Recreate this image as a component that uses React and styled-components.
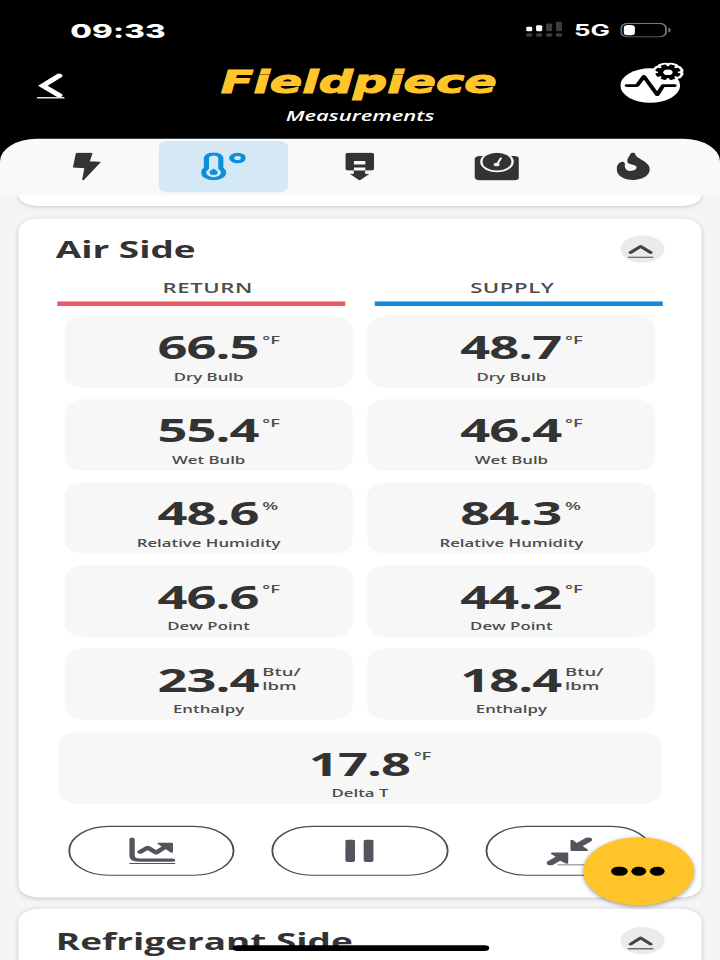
import React from 'react';
import styled, { createGlobalStyle } from 'styled-components';

const GlobalStyle = createGlobalStyle`
    * {
        box-sizing: border-box;
    }

    body {
        margin: 0;
        background: #f5f5f5;
        overflow: hidden;
    }
`

const Viewport = styled.div`
    width: 720px;
    height: 960px;
    overflow: hidden;
`

/* the phone screen is 390x844 points, stretched over the whole viewport */
const Screen = styled.div`
    position: relative;
    display: flex;
    flex-direction: column;
    width: 390px;
    height: 844px;
    overflow: hidden;
    background: #f5f5f5;
    color: #333;
    font-family: "Open Sans", "Noto Sans", sans-serif;
    transform: scale(1.84615, 1.13744);
    transform-origin: 0 0;
`

const Header = styled.header`
    flex: none;
    height: 142px;
    margin-bottom: -20px;
    background: #000;
    color: #fff;
`

const StatusBar = styled.div`
    display: flex;
    align-items: center;
    justify-content: space-between;
    height: 52px;
    padding: 0 26.5px 0 38px;
`

const Clock = styled.span`
    padding-top: 1px;
    font-family: Inter, sans-serif;
    font-size: 17px;
    font-weight: 800;
    letter-spacing: 0.1px;
`

const StatusIcons = styled.div`
    display: flex;
    align-items: center;
    gap: 5.6px;
`

const Network = styled.span`
    font-family: Inter, sans-serif;
    font-size: 14px;
    font-weight: 650;
`

const TitleBar = styled.div`
    display: flex;
    align-items: flex-start;
    justify-content: space-between;
    height: 70px;
    padding: 0 19px 0 20px;
`

const BackButton = styled.a`
    display: flex;
    width: 35px;
    margin-top: 11.8px;
`

const Brand = styled.div`
    display: flex;
    flex-direction: column;
    align-items: center;
    width: 160px;
`

const Logo = styled.div`
    height: 40px;
    color: #ffc52b;
    font-family: "DejaVu Sans", sans-serif;
    font-size: 27.5px;
    font-weight: 700;
    font-style: italic;
    line-height: 41px;
    white-space: nowrap;
    -webkit-text-stroke: 0.9px #ffc52b;
    transform: translateX(-1px) scaleX(0.942);
`

const Subtitle = styled.div`
    margin-left: -1px;
    font-size: 11.9px;
    font-weight: 600;
    font-style: italic;
    line-height: 19px;
`

const ProbeButton = styled.div`
    display: flex;
    margin-top: 3px;
`

const Tabs = styled.nav`
    position: relative;
    z-index: 1;
    flex: none;
    display: flex;
    gap: 4px;
    height: 48.5px;
    padding: 1.8px 12px;
    background: #f9f9f9;
    border-radius: 20px 20px 0 0;
`

const Tab = styled.div`
    display: flex;
    align-items: center;
    justify-content: center;
    width: 70px;
    height: 45px;
    border-radius: 5px;
    background: ${props => props.$active ? '#d4e8f6' : 'transparent'};
    color: ${props => props.$active ? '#0f8edb' : '#333'};
`

const Content = styled.main`
    display: flex;
    flex-direction: column;
    gap: 10.6px;
    padding: 0 10px;
`

const Card = styled.section`
    flex: none;
    height: ${props => props.$height}px;
    padding: 0 21px;
    background: #fff;
    border-radius: ${props => props.$cut ? '0 0 11px 11px' : '11px'};
    box-shadow: 0 1px 3px rgba(0, 0, 0, 0.17);
`

const CardHead = styled.div`
    display: flex;
    align-items: center;
    justify-content: space-between;
    height: 55px;
    margin: 0 -0.8px;
`

const CardTitle = styled.h2`
    margin: 0;
    padding-top: 2px;
    font-size: 20px;
    font-weight: 700;
    line-height: 28px;
`

const Collapse = styled.div`
    display: flex;
    align-items: center;
    justify-content: center;
    width: 24px;
    height: 24px;
    padding: 2.4px 1px 0 0;
    border-radius: 50%;
    background: #ebebeb;
`

const Columns = styled.div`
    display: grid;
    grid-template-columns: 1fr 1fr;
    gap: 16px;
`

const ColumnHead = styled.div`
    height: 22.5px;
    padding-left: ${props => props.$shift > 0 ? props.$shift : 0}px;
    padding-right: ${props => props.$shift < 0 ? -props.$shift : 0}px;
    border-bottom: 4px solid ${props => props.$color};
    color: #4d4d4d;
    font-size: 12px;
    font-weight: 650;
    line-height: 14px;
    letter-spacing: 0.3px;
    text-align: center;
`

const Readings = styled.div`
    display: grid;
    grid-template-columns: 156px 156px;
    gap: 10px 8px;
    padding: 9px 4px 10px;
`

const Tile = styled.div`
    height: ${props => props.$wide ? 64 : 63}px;
    margin: ${props => props.$wide ? '0 0.6px' : '0'};
    padding-top: ${props => props.$wide ? 14.6 : 14}px;
    background: #f7f7f7;
    border-radius: 11px;
    text-align: center;
`

const ValueRow = styled.div`
    display: grid;
    grid-template-columns: 1fr auto 1fr;
    height: 33px;
`

const Value = styled.span`
    grid-column: 2;
    margin: -1.2px 0.3px 0 -0.3px;
    font-size: 28.4px;
    font-weight: 700;
    line-height: 28px;
    letter-spacing: -0.5px;
`

const Unit = styled.span`
    padding-left: 1.7px;
    color: #4d4d4d;
    font-size: 10px;
    font-weight: 550;
    line-height: 13.3px;
    text-align: left;
    white-space: pre-line;
`

const Label = styled.div`
    color: #4d4d4d;
    font-size: 9.1px;
    font-weight: 550;
    line-height: 13px;
`

const Actions = styled.div`
    display: flex;
    gap: 20px;
    padding: 19px 6px 0;
`

const Action = styled.div`
    display: flex;
    align-items: center;
    justify-content: center;
    width: ${props => props.$width}px;
    height: 44px;
    border: 1.2px solid #4d4d52;
    border-radius: 22px;
    color: #54555c;
`

const MoreButton = styled.div`
    position: absolute;
    right: 13.6px;
    bottom: 48px;
    display: flex;
    align-items: center;
    justify-content: center;
    gap: 1.9px;
    width: 60px;
    height: 60px;
    padding-right: 1.4px;
    border-radius: 50%;
    background: #ffc42a;
    box-shadow: 0 1px 3px rgba(0, 0, 0, 0.4);
`

const Dot = styled.span`
    width: 8.3px;
    height: 8.3px;
    border-radius: 50%;
    background: #000;
`

const HomeIndicator = styled.div`
    position: absolute;
    left: 125.7px;
    bottom: 8px;
    width: 139px;
    height: 5px;
    border-radius: 3px;
    background: #000;
`

const SignalIcon = () => (
    <svg width="20" height="14" viewBox="0 0 20 14">
        <g fill="#fff">
            <rect x="0" y="4.6" width="3.3" height="3.8" rx="0.9" />
            <rect x="5.4" y="3.2" width="3.3" height="5.2" rx="0.9" />
        </g>
        <g fill="#3c3c3c">
            <rect x="10.8" y="1.6" width="3.3" height="6.8" rx="0.9" />
            <rect x="16.1" y="0" width="3.3" height="8.4" rx="0.9" />
            <rect x="0" y="10.3" width="3.3" height="3" rx="0.9" />
            <rect x="5.4" y="10.3" width="3.3" height="3" rx="0.9" />
            <rect x="10.8" y="10.3" width="3.3" height="3" rx="0.9" />
            <rect x="16.1" y="10.3" width="3.3" height="3" rx="0.9" />
        </g>
    </svg>
)

const BatteryIcon = () => (
    <svg width="27.5" height="13" viewBox="0 0 27.5 13">
        <rect x="0.5" y="0.5" width="24.2" height="12" rx="3.8" fill="none" stroke="#777" />
        <rect x="1.9" y="1.9" width="6" height="9.2" rx="2.2" fill="#fff" />
        <path d="M26 4.5c1.8 .6 1.8 3.4 0 4z" fill="#777" />
    </svg>
)

const BackIcon = () => (
    <svg width="15" height="23" viewBox="0 0 15 23">
        <path d="M12 2.6L3.2 11.4l8.8 8.4" fill="none" stroke="#fff" strokeWidth="3.6" strokeLinecap="round" />
        <path d="M0 22h15" stroke="#ddd" strokeWidth="1.4" />
    </svg>
)

const GearShape = () => (
    <>
        <circle cx="25.8" cy="8.5" r="5.3" />
        {[0, 45, 90, 135, 180, 225, 270, 315].map(angle => (
            <rect key={angle} x="24.2" y="1.6" width="3.2" height="4" rx="0.6" transform={`rotate(${angle + 22.5} 25.8 8.5)`} />
        ))}
    </>
)

const ProbeIcon = () => (
    <svg width="35" height="36" viewBox="0 0 35 36">
        <ellipse cx="16.2" cy="20.2" rx="16.2" ry="15.1" fill="#fff" />
        <path d="M3.5 20.2h5.6l3.7-8 7.2 16 3.2-8h6.2" fill="none" stroke="#000" strokeWidth="2.4" strokeLinecap="round" strokeLinejoin="round" />
        <g fill="#fff" stroke="#fff" strokeWidth="3.2" strokeLinejoin="round"><GearShape /></g>
        <g fill="#000"><GearShape /></g>
        <circle cx="25.8" cy="8.5" r="2.5" fill="#fff" />
    </svg>
)

const BoltIcon = () => (
    <svg width="16" height="25" viewBox="0 0 16 25">
        <path d="M2.6 .8h8L9 8.3l6 .4L6 24 7.2 13.5 1 12.8z" fill="currentColor" stroke="currentColor" strokeLinejoin="round" />
    </svg>
)

const ThermometerIcon = () => (
    <svg width="24.5" height="25" viewBox="0 0 24.5 25">
        <path d="M2.8 14V5.2a3.9 3.9 0 0 1 7.8 0V14a5.4 5.4 0 1 1-7.8 0z" fill="none" stroke="currentColor" strokeWidth="2.8" />
        <path d="M6.7 14.2c.4 1 2.2 1.6 2.2 3.5a2.2 2.2 0 0 1-4.4 0c0-1.9 1.8-2.5 2.2-3.5z" fill="currentColor" />
        <circle cx="19.7" cy="4.9" r="3.2" fill="none" stroke="currentColor" strokeWidth="2.8" />
    </svg>
)

const FilterIcon = () => (
    <svg width="16" height="25" viewBox="0 0 16 25">
        <path d="M1.6 .3h12.6q1.4 0 1.4 1.4v12.6q0 1.6-1.4 1.6h-3.4v2.9h2.4L7.8 24.6l-5.4-5.8h2.2v-2.9h-3q-1.5 0-1.5-1.6V1.7Q.1.3 1.6.3z" fill="currentColor" />
        <path d="M4.7 7.6h6.2v3H4.7zM4.7 13.3h6.2v2.5H4.7zM.6 16.2h3.8v2.4H.6zM11 16.2h4v2.4h-4z" fill="#f9f9f9" />
    </svg>
)

const GaugeIcon = () => (
    <svg width="24.5" height="25" viewBox="0 0 24.5 25">
        <rect x="0" y="3.2" width="24.4" height="21.3" rx="2.8" fill="currentColor" />
        <circle cx="12.2" cy="8.3" r="9.1" fill="#f9f9f9" />
        <circle cx="12.2" cy="8.1" r="7.8" fill="currentColor" />
        <path d="M12.3 10.5l2-5.4" stroke="#f9f9f9" strokeWidth="1.2" strokeLinecap="round" />
        <circle cx="12" cy="10.6" r="1.6" fill="#f9f9f9" />
    </svg>
)

const FlameIcon = () => (
    <svg width="18" height="24.5" viewBox="0 0 100 84" preserveAspectRatio="none">
        <path d="M50 0C55 0 56 3 57 8C62 20 100 28 100 51C100 70 76 83 50 83C22 83 0 70 0 50C0 39 8 28 18 28C26 28 25 36 25 43C26 51 32 56 42 56C53 56 60 51 60 45C60 34 32 40 32 26C32 16 38 13 42 4C44 1 46 0 50 0Z" fill="currentColor" />
    </svg>
)

const ChevronIcon = () => (
    <svg width="14" height="14" viewBox="0 0 14 14">
        <path d="M1.6 9L7 3.6L12.4 9" fill="none" stroke="#444" strokeWidth="2.3" strokeLinecap="round" strokeLinejoin="round" />
        <path d="M0 13.2h14" stroke="#444" strokeWidth="1" />
    </svg>
)

const ChartIcon = () => (
    <svg width="25" height="24" viewBox="0 0 25 24">
        <path d="M1.5 1.8v14.4q0 4 4 4h18" fill="none" stroke="currentColor" strokeWidth="3" strokeLinecap="round" />
        <path d="M6 13l4-3.8 4.6 4.4 5.4-5.6" fill="none" stroke="currentColor" strokeWidth="3.2" strokeLinecap="round" strokeLinejoin="round" />
        <path d="M16 5.6h7v7.4z" fill="currentColor" stroke="currentColor" strokeWidth="1.4" strokeLinejoin="round" />
        <path d="M0 23.2h25" stroke="currentColor" strokeWidth="1" />
    </svg>
)

const PauseIcon = () => (
    <svg width="15.4" height="20" viewBox="0 0 15.4 20">
        <rect width="5.3" height="19.8" rx="1.6" fill="currentColor" />
        <rect x="10" width="5.3" height="19.8" rx="1.6" fill="currentColor" />
    </svg>
)

const CompressIcon = () => (
    <svg width="25" height="25" viewBox="0 0 25 25">
        <g fill="currentColor" stroke="currentColor" strokeWidth="1.6" strokeLinejoin="round">
            <path d="M3.2 14.2h7.8v8.4l-3-2.4-2-3.2z" />
            <path d="M13.8 3.2v8.2h8l-2.8-3-2.6-2z" />
        </g>
        <path d="M2.2 22.8L8 17.2M22.6 2.2l-6 5.6" stroke="currentColor" strokeWidth="4.2" strokeLinecap="round" />
        <path d="M6 24.4h19" stroke="currentColor" strokeWidth="0.9" />
    </svg>
)

const tabs = [BoltIcon, ThermometerIcon, FilterIcon, GaugeIcon, FlameIcon];

const readings = [
    { value: '66.5', unit: '°F', label: 'Dry Bulb' },
    { value: '48.7', unit: '°F', label: 'Dry Bulb' },
    { value: '55.4', unit: '°F', label: 'Wet Bulb' },
    { value: '46.4', unit: '°F', label: 'Wet Bulb' },
    { value: '48.6', unit: '%', label: 'Relative Humidity' },
    { value: '84.3', unit: '%', label: 'Relative Humidity' },
    { value: '46.6', unit: '°F', label: 'Dew Point' },
    { value: '44.2', unit: '°F', label: 'Dew Point' },
    { value: '23.4', unit: 'Btu/\nlbm', label: 'Enthalpy' },
    { value: '18.4', unit: 'Btu/\nlbm', label: 'Enthalpy' },
];

const Reading = ({ value, unit, label, wide }) => {
    return(
        <Tile $wide={wide}>
            <ValueRow>
                <Value>{value}</Value>
                <Unit>{unit}</Unit>
            </ValueRow>
            <Label>{label}</Label>
        </Tile>
    )
}

const App = () => {
    return(
        <Viewport>
            <GlobalStyle />
            <Screen>
                <Header>
                    <StatusBar>
                        <Clock>09:33</Clock>
                        <StatusIcons>
                            <SignalIcon />
                            <Network>5G</Network>
                            <BatteryIcon />
                        </StatusIcons>
                    </StatusBar>
                    <TitleBar>
                        <BackButton><BackIcon /></BackButton>
                        <Brand>
                            <Logo>Fieldpiece</Logo>
                            <Subtitle>Measurements</Subtitle>
                        </Brand>
                        <ProbeButton><ProbeIcon /></ProbeButton>
                    </TitleBar>
                </Header>
                <Tabs>
                    {tabs.map((Icon, i) => (
                        <Tab key={i} $active={i === 1}><Icon /></Tab>
                    ))}
                </Tabs>
                <Content>
                    <Card $height={10.6} $cut />
                    <Card $height={597}>
                        <CardHead>
                            <CardTitle>Air Side</CardTitle>
                            <Collapse><ChevronIcon /></Collapse>
                        </CardHead>
                        <Columns>
                            <ColumnHead $color="#e95a62" $shift={7}>RETURN</ColumnHead>
                            <ColumnHead $color="#0f8bdc" $shift={-7}>SUPPLY</ColumnHead>
                        </Columns>
                        <Readings>
                            {readings.map((item, i) => (
                                <Reading key={i} {...item} />
                            ))}
                        </Readings>
                        <Reading value="17.8" unit="°F" label="Delta T" wide />
                        <Actions>
                            <Action $width={90}><ChartIcon /></Action>
                            <Action $width={96}><PauseIcon /></Action>
                            <Action $width={90}><CompressIcon /></Action>
                        </Actions>
                    </Card>
                    <Card $height={80}>
                        <CardHead>
                            <CardTitle>Refrigerant Side</CardTitle>
                            <Collapse><ChevronIcon /></Collapse>
                        </CardHead>
                    </Card>
                </Content>
                <MoreButton>
                    <Dot />
                    <Dot />
                    <Dot />
                </MoreButton>
                <HomeIndicator />
            </Screen>
        </Viewport>
    )
}

export default App;
